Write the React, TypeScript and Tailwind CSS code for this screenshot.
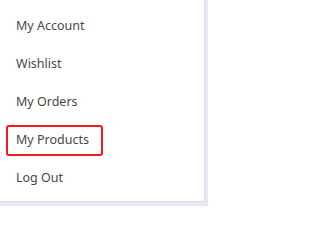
const items = ["My Account", "Wishlist", "My Orders", "My Products", "Log Out"];

export default function App() {
    return (
        <div className="w-[208px] h-[206px] bg-[#e9e8f2] overflow-hidden">
            <div className="w-[205px] h-[202px] bg-white rounded-br-[4px] border-r border-b border-[#dddbe9] pt-[7px] font-['Noto_Sans',sans-serif] text-[12.5px] text-[#474747]">
                {items.map((item) =>
                    item === "My Products" ? (
                        <div key={item} className="h-[38px] flex items-center">
                            <div className="ml-[6px] w-[97px] h-[31px] pl-[8px] flex items-center border-[2.5px] border-[#f5191c] rounded-[3px]">
                                {item}
                            </div>
                        </div>
                    ) : (
                        <div key={item} className="h-[38px] flex items-center px-4">
                            {item}
                        </div>
                    )
                )}
            </div>
        </div>
    );
}
